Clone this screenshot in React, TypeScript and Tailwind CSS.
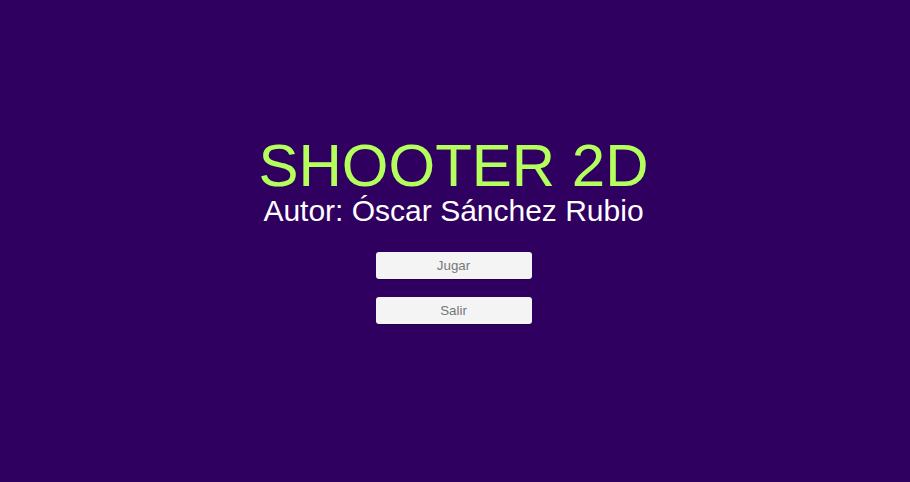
export default function App() {
  return (
    <div className="w-[910px] h-[482px] bg-[#2f0060] flex flex-col items-center pt-[136px] pr-[3px]" style={{ fontFamily: '"Liberation Sans", Arial, sans-serif' }}>
      <h1 className="text-[60px] leading-[60px] text-[#b4ff5c]">SHOOTER 2D</h1>
      <h2 className="text-[30px] leading-[30px] text-white">Autor: Óscar Sánchez Rubio</h2>
      <div className="mt-[26px] flex flex-col gap-[18px]">
        <button className="w-[156px] h-[27px] rounded-[3px] bg-[#f4f4f4] text-[13.33px] text-[#777] shadow-[0_1px_1px_rgba(0,0,0,0.25)]">Jugar</button>
        <button className="w-[156px] h-[27px] rounded-[3px] bg-[#f4f4f4] text-[13.33px] text-[#777] shadow-[0_1px_1px_rgba(0,0,0,0.25)]">Salir</button>
      </div>
    </div>
  );
}
